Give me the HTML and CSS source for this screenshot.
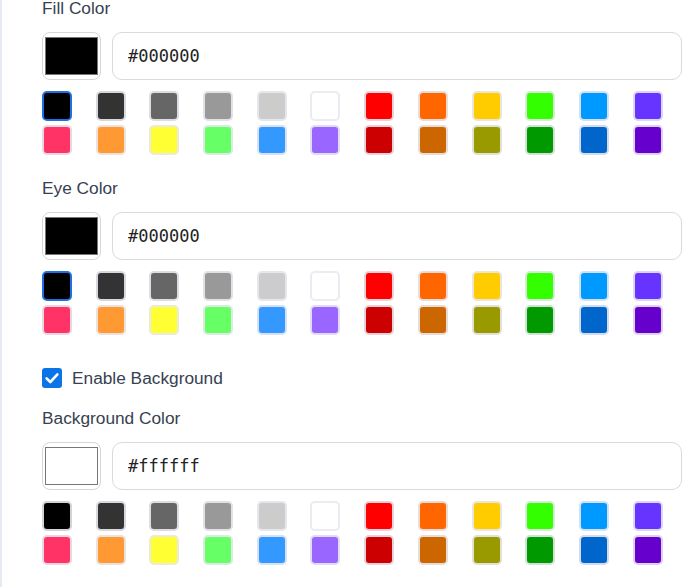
FILE: index.html
```html
<!DOCTYPE html>
<html lang="en">
<head>
    <meta charset="UTF-8">
    <title>QR colors</title>
    <link rel="stylesheet" href="styles.css">
</head>
<body>
    <div class="panel">
        <div class="field">
            <label class="label">Fill Color</label>
            <div class="picker">
                <div class="chip"><div class="chip-fill" style="background:#000000"></div></div>
                <input class="hex" type="text" value="#000000">
            </div>
            <div class="palette" data-selected="#000000"></div>
        </div>
        <div class="field">
            <label class="label">Eye Color</label>
            <div class="picker">
                <div class="chip"><div class="chip-fill" style="background:#000000"></div></div>
                <input class="hex" type="text" value="#000000">
            </div>
            <div class="palette" data-selected="#000000"></div>
        </div>
        <label class="check">
            <span class="check-box">
                <svg width="20" height="20" viewBox="0 0 20 20"><path d="M4.6 10.4 L8.3 14 L15.4 6.4" fill="none" stroke="#fff" stroke-width="2.6" stroke-linecap="round" stroke-linejoin="round"/></svg>
            </span>
            Enable Background
        </label>
        <div class="field">
            <label class="label">Background Color</label>
            <div class="picker">
                <div class="chip"><div class="chip-fill" style="background:#ffffff"></div></div>
                <input class="hex" type="text" value="#ffffff">
            </div>
            <div class="palette" data-selected=""></div>
        </div>
    </div>
    <script>
        var colors = [
            '#000000','#333333','#666666','#999999','#cccccc','#ffffff',
            '#ff0000','#ff6600','#ffcc00','#33ff00','#0099ff','#6633ff',
            '#ff3366','#ff9933','#ffff33','#66ff66','#3399ff','#9966ff',
            '#cc0000','#cc6600','#999900','#009900','#0066cc','#6600cc'
        ];
        var palettes = document.querySelectorAll('.palette');
        for (var p = 0; p < palettes.length; p++) {
            var sel = palettes[p].getAttribute('data-selected');
            for (var i = 0; i < colors.length; i++) {
                var s = document.createElement('span');
                s.className = colors[i] == sel ? 'swatch active' : 'swatch';
                s.style.backgroundColor = colors[i];
                s.title = colors[i];
                palettes[p].appendChild(s);
            }
        }
    </script>
</body>
</html>
```

FILE: styles.css
```css
* {
    box-sizing: border-box;
}
body {
    margin: 0;
    background: #fff;
    font-family: "Liberation Sans", Arial, sans-serif;
    color: #374151;
}
.panel {
    border-left: 2px solid #e6ebf1;
    padding: 0 13px 0 40px;
    margin-top: -4px;
    min-height: 591px;
}
.field {
    margin-bottom: 21px;
}
.field:last-child {
    margin-bottom: 0;
}
.label {
    display: block;
    font-size: 17.3px;
    line-height: 24px;
    color: #374151;
    margin-bottom: 12px;
}
.picker {
    display: flex;
    gap: 11px;
    height: 48px;
}
.chip {
    width: 59px;
    flex: none;
    border: 1px solid #d6d6d6;
    border-radius: 8px;
    padding: 4px 2px;
}
.chip-fill {
    width: 100%;
    height: 100%;
    border: 1px solid #777;
}
.hex {
    flex: 1;
    min-width: 0;
    border: 1px solid #dadada;
    border-radius: 10px;
    padding: 0 15px;
    font-family: "DejaVu Sans Mono", monospace;
    font-size: 17px;
    color: #222;
    background: #fff;
    outline: none;
}
.palette {
    display: grid;
    grid-template-columns: repeat(12, 30px);
    column-gap: 23.7px;
    row-gap: 4px;
    margin-top: 11px;
}
.swatch {
    width: 30px;
    height: 30px;
    border: 2px solid rgba(233, 233, 240, 0.9);
    border-radius: 5px;
}
.swatch.active {
    border-color: #1f6fe5;
}
.check {
    display: flex;
    align-items: center;
    gap: 10px;
    height: 24px;
    margin: 31px 0 16px;
    font-size: 17.3px;
    color: #374151;
}
.check-box {
    width: 20px;
    height: 20px;
    border-radius: 3px;
    background: #0b75e8;
    display: block;
}
.check-box svg {
    display: block;
}
```
